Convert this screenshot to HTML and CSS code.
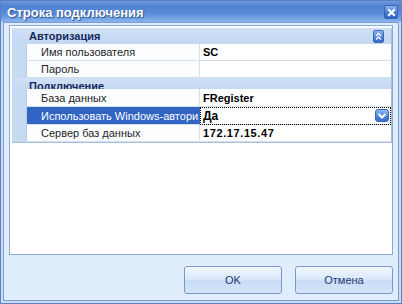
FILE: index.html
```html
<!DOCTYPE html>
<html>
<head>
<meta charset="utf-8">
<link rel="stylesheet" href="styles.css">
</head>
<body>
<div class="window">
  <div class="titlebar">
    <span class="title">Строка подключения</span>
    <span class="close"><svg width="11" height="11" viewBox="0 0 11 11"><path d="M3 3 L8 8 M8 3 L3 8" stroke="#fff" stroke-width="2.2" stroke-linecap="square" fill="none"/></svg></span>
  </div>
  <div class="client">
    <div class="panel">
      <div class="grid">
        <div class="cat cat-open">
          <span class="cat-text">Авторизация</span>
          <span class="collapse"><svg width="9" height="11" viewBox="0 0 9 11"><path d="M2 5 L4.5 2.5 L7 5 M2 8.5 L4.5 6 L7 8.5" stroke="#fff" stroke-width="1.3" fill="none"/></svg></span>
        </div>
        <div class="row">
          <div class="gutter"></div>
          <div class="name">Имя пользователя</div>
          <div class="value">SC</div>
        </div>
        <div class="row">
          <div class="gutter"></div>
          <div class="name">Пароль</div>
          <div class="value"></div>
        </div>
        <div class="cat cat-clip">
          <span class="cat-text">Подключение</span>
        </div>
        <div class="row row-tall">
          <div class="gutter"></div>
          <div class="name">База данных</div>
          <div class="value">FRegister</div>
        </div>
        <div class="row row-tall row-selected">
          <div class="gutter"></div>
          <div class="name"><span class="clip">Использовать Windows-авторизацию</span></div>
          <div class="value value-focus">
            <span>Да</span>
            <span class="drop"><svg width="12" height="11" viewBox="0 0 12 11"><path d="M2.5 4 L6 7.5 L9.5 4" stroke="#fff" stroke-width="2" fill="none"/></svg></span>
          </div>
        </div>
        <div class="row">
          <div class="gutter"></div>
          <div class="name">Сервер баз данных</div>
          <div class="value value-num">172.17.15.47</div>
        </div>
      </div>
    </div>
    <div class="buttons">
      <button class="btn">OK</button>
      <button class="btn">Отмена</button>
    </div>
  </div>
</div>
</body>
</html>
```
FILE: styles.css
```css
html, body {
  margin: 0;
  padding: 0;
}
body {
  width: 402px;
  height: 304px;
  overflow: hidden;
  font-family: "Liberation Sans", Arial, sans-serif;
  font-size: 11px;
}
.window {
  box-sizing: border-box;
  width: 402px;
  height: 304px;
  border: 1px solid #5b80bf;
  background: #c9dcf5;
  display: flex;
  flex-direction: column;
}
.titlebar {
  height: 21px;
  flex: none;
  display: flex;
  align-items: center;
  justify-content: space-between;
  padding: 0 3px 0 6px;
  background: linear-gradient(to bottom, #6b99dd 0%, #4f82d3 25%, #5a8cd8 60%, #8ab6ee 100%);
}
.title {
  color: #fff;
  font-weight: bold;
  font-size: 13px;
  text-shadow: 1px 1px 1px #2a4f8f;
  margin-top: 1px;
}
.close {
  box-sizing: border-box;
  width: 14px;
  height: 14px;
  border: 1px solid #3a62ad;
  border-radius: 2px;
  background: linear-gradient(to bottom, #8db4ef 0%, #4a7fd6 50%, #2c62c6 100%);
  display: flex;
  align-items: center;
  justify-content: center;
  margin-top: 1px;
}
.client {
  flex: 1;
  box-sizing: border-box;
  margin: 0 2px 2px 2px;
  border: 1px solid #7c9bd0;
  background: #dfedfc;
  padding: 2px 5px 6px 5px;
  display: flex;
  flex-direction: column;
}
.panel {
  flex: 1;
  border: 1px solid #8ea9cf;
  background: #fff;
  padding: 2px 0 0 2px;
}
.grid {
  border-right: 1px solid #a9bedb;
  border-bottom: 1px solid #a9bedb;
}
.cat {
  display: flex;
  align-items: center;
  justify-content: space-between;
  background: linear-gradient(to bottom, #cfe0f6, #c3d8f2);
  padding-left: 17px;
  padding-right: 7px;
  color: #15285c;
  font-weight: bold;
}
.cat-open {
  height: 16px;
}
.cat-clip {
  height: 11px;
  overflow: hidden;
  align-items: flex-start;
  line-height: 17px;
}
.collapse {
  box-sizing: border-box;
  width: 11px;
  height: 13px;
  border: 1px solid #3e68b0;
  border-radius: 2px;
  background: linear-gradient(to bottom, #8fb6ee 0%, #4e83d8 55%, #3567c8 100%);
  display: flex;
  align-items: center;
  justify-content: center;
}
.row {
  display: flex;
  height: 17px;
}
.row-tall {
  height: 18px;
}
.gutter {
  width: 14px;
  flex: none;
  background: #c6daf2;
}
.name {
  box-sizing: border-box;
  width: 174px;
  flex: none;
  padding-left: 14px;
  border-bottom: 1px solid #d5e0ed;
  border-right: 1px solid #d5e0ed;
  border-left: 1px solid #b7cde9;
  color: #1f1f1f;
  white-space: nowrap;
  overflow: hidden;
  display: flex;
  align-items: center;
  background: #fbfdff;
}
.clip {
  display: block;
  overflow: hidden;
  max-width: 158px;
}
.value {
  box-sizing: border-box;
  flex: 1;
  padding-left: 3px;
  border-bottom: 1px solid #d5e0ed;
  font-weight: bold;
  color: #000;
  display: flex;
  align-items: center;
  white-space: nowrap;
}
.value-num {
  letter-spacing: 0.6px;
}
.row-selected .name {
  background: #3164c3;
  color: #fff;
  border-right-color: #3164c3;
}
.value-focus {
  outline: 1px dotted #000;
  outline-offset: -1px;
  justify-content: space-between;
  padding-right: 2px;
  font-size: 12px;
}
.drop {
  box-sizing: border-box;
  width: 14px;
  height: 13px;
  border: 1px solid #3e68b0;
  border-radius: 3px;
  background: linear-gradient(to bottom, #94baf0 0%, #5088db 55%, #3a6cc9 100%);
  display: flex;
  align-items: center;
  justify-content: center;
}
.buttons {
  flex: none;
  display: flex;
  justify-content: flex-end;
  gap: 13px;
  margin-top: 11px;
  height: 28px;
}
.btn {
  box-sizing: border-box;
  width: 98px;
  height: 28px;
  border: 1px solid #7a97c8;
  border-radius: 3px;
  background: linear-gradient(to bottom, #f1f7ff 0%, #dbe9fb 45%, #c8dcf6 55%, #d6e6fa 100%);
  font-family: "Liberation Sans", Arial, sans-serif;
  font-size: 11px;
  color: #1c3a72;
  padding: 0;
}
```
